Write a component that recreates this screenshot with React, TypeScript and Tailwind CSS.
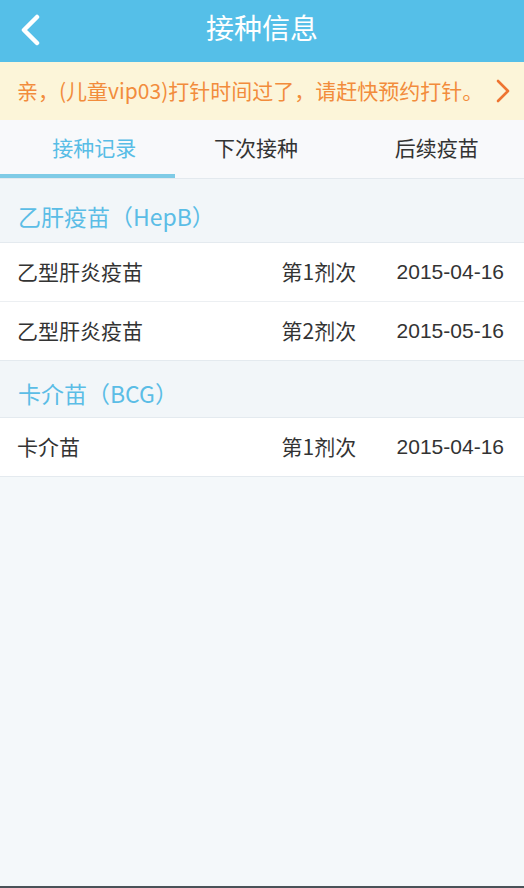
const FONT = { fontFamily: '"Noto Sans CJK SC", "Noto Sans", sans-serif' };

const GROUPS = [
  {
    title: '乙肝疫苗（HepB）',
    rows: [
      { name: '乙型肝炎疫苗', dose: '第1剂次', date: '2015-04-16' },
      { name: '乙型肝炎疫苗', dose: '第2剂次', date: '2015-05-16' },
    ],
  },
  {
    title: '卡介苗（BCG）',
    rows: [{ name: '卡介苗', dose: '第1剂次', date: '2015-04-16' }],
  },
];

const TABS = [
  { label: '接种记录', cls: 'ml-[14px]' },
  { label: '下次接种', cls: 'mr-[12px]' },
  { label: '后续疫苗', cls: '' },
];

export default function App() {
  return (
    <div className="w-[524px] h-[888px] flex flex-col bg-[#f4f8fa] overflow-hidden" style={FONT}>
      {/* Header */}
      <header className="h-[62px] shrink-0 bg-[#55bfe8] flex items-center relative">
        <svg className="absolute left-[18px] top-[14px]" width="24" height="32" viewBox="0 0 24 32">
          <path d="M19 3 L6 16 L19 29" fill="none" stroke="#fff" strokeWidth="4.5" strokeLinecap="round" strokeLinejoin="round" />
        </svg>
        <h1 className="w-full text-center text-white text-[28px] pb-[8px] leading-none">接种信息</h1>
      </header>

      {/* Notice */}
      <div className="h-[58px] shrink-0 bg-[#fcf5d9] flex items-center pl-[17px] pr-[14px]">
        <p className="flex-1 text-[#f28c3c] text-[21px] whitespace-nowrap">亲，(儿童vip03)打针时间过了，请赶快预约打针。</p>
        <svg width="14" height="24" viewBox="0 0 14 24">
          <path d="M2 2 L12 12 L2 22" fill="none" stroke="#ee7431" strokeWidth="2.6" strokeLinecap="round" strokeLinejoin="round" />
        </svg>
      </div>

      {/* Tabs */}
      <nav className="h-[59px] shrink-0 bg-[#f8f9fb] flex border-b border-[#e3e9ee]">
        {TABS.map((t, i) => (
          <div key={t.label} className="flex-1 relative flex items-center justify-center pb-[2px]">
            <span className={`${t.cls} text-[21px] ${i === 0 ? 'text-[#58bde6]' : 'text-[#333]'}`}>{t.label}</span>
            {i === 0 && <div className="absolute left-0 right-0 bottom-0 h-[4px] bg-[#7fcbe6]" />}
          </div>
        ))}
      </nav>

      {/* Records */}
      {GROUPS.map((g, gi) => (
        <section key={g.title}>
          <div
            className={`${gi === 0 ? 'h-[64px] pt-[12px]' : 'h-[57px] pt-[8px]'} flex items-center pl-[18px] text-[#5bbde6] text-[23px] bg-[#f2f6f9] border-b border-[#e4eaef]`}
          >
            {g.title}
          </div>
          <div className="bg-white border-b border-[#e4eaef]">
            {g.rows.map((r, i) => (
              <div key={i} className={i > 0 ? 'pl-[17px] border-t border-[#eceff2]' : 'pl-[17px]'}>
                <div className="h-[58px] flex items-center pr-[20px] text-[21px] text-[#333]">
                  <span className="flex-1">{r.name}</span>
                  <span className="w-[115px]">{r.dose}</span>
                  <span style={{ fontFamily: '"Liberation Sans", Arial, sans-serif' }}>{r.date}</span>
                </div>
              </div>
            ))}
          </div>
        </section>
      ))}

      <div className="flex-1" />
      <div className="h-[2px] bg-[#4a5258]" />
    </div>
  );
}
